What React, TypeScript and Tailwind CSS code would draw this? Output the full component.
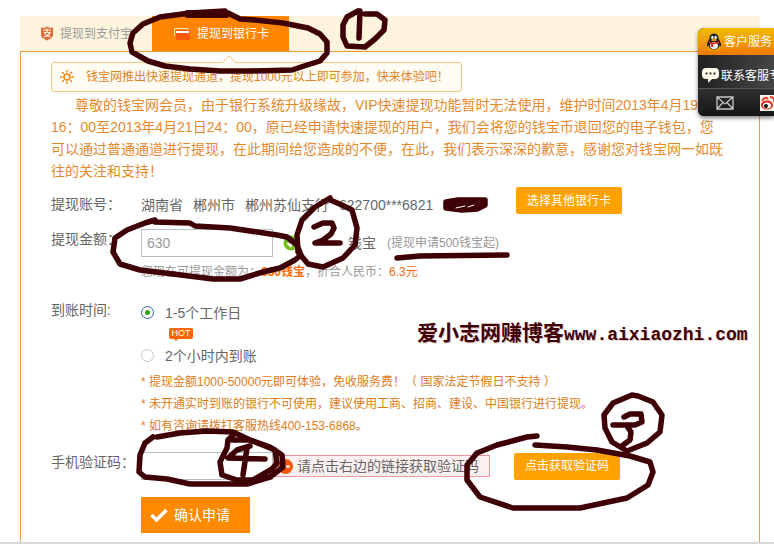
import React, { useState } from 'react';

type FormRowProps = {
	label?: string;
	htmlFor?: string;
	className?: string;
	children: React.ReactNode;
};

const FormRow = (props: FormRowProps) => {
	const {
		label,
		htmlFor,
		className,
		children,
	} = props;

	return (
		<div className={`flex items-start ${className || ''}`}>
			<label htmlFor={htmlFor} className="w-[90px] shrink-0 leading-5 whitespace-nowrap">{label}</label>
			<div className="min-w-0 flex-1">{children}</div>
		</div>
	);
};

type SmallButtonProps = {
	className?: string;
	children: React.ReactNode;
};

const SmallButton = (props: SmallButtonProps) => (
	<button type="button" className={`h-[27px] w-[106px] shrink-0 rounded-xs bg-[#ffa200] text-xs text-white ${props.className || ''}`}>
		{props.children}
	</button>
);

const AlipayIcon = () => (
	<svg width="14" height="15" viewBox="0 0 14 15" aria-hidden="true">
		<path d="M1 1.5 4 2 7 .5 10 2l3-.5V9c0 2.500-3 4-6 5.500C4 13 1 11.500 1 9Z" fill="#e26a3c" />
		<path d="M3 4h8M7 2.500v4M3.800 6.500h6.200C9 9 6.500 10.500 3.500 11M4.500 7.500C6 9.500 8 10.500 10.500 10.800" fill="none" stroke="#fff5df" strokeWidth="1.200" />
	</svg>
);

const CardIcon = () => (
	<svg width="16" height="12" viewBox="0 0 16 12" aria-hidden="true">
		<path d="M.5 8V.5h13V2" fill="none" stroke="#ffe2b8" />
		<rect x="2" y="2" width="14" height="10" rx="1" fill="#ff5a0a" />
		<path d="M2 4h13" stroke="#fff" strokeWidth="2" />
	</svg>
);

const SunIcon = () => (
	<svg width="14" height="14" viewBox="0 0 14 14" fill="none" stroke="#ef8b1c" aria-hidden="true">
		<circle cx="7" cy="7" r="3" strokeWidth="1.600" />
		<path d="M7 0v2.500M7 11.500V14M0 7h2.500M11.500 7H14M2 2l1.800 1.800M10.200 10.200 12 12M12 2l-1.800 1.800M3.800 10.200 2 12" strokeWidth="1.500" />
	</svg>
);

const OkIcon = () => (
	<svg width="16" height="16" viewBox="0 0 16 16" aria-hidden="true">
		<circle cx="8" cy="8" r="7.500" fill="#72bf1e" />
		<path d="m4.500 8 3 3 4.500-6" fill="none" stroke="#fff" strokeWidth="2.200" />
	</svg>
);

const MinusIcon = () => (
	<svg width="15" height="15" viewBox="0 0 15 15" className="shrink-0" aria-hidden="true">
		<circle cx="7.500" cy="7.500" r="7.500" fill="#f4590b" />
		<path d="M3.500 7.500h8" stroke="#fff" strokeWidth="2" />
	</svg>
);

const QQIcon = () => (
	<svg width="16" height="18" viewBox="0 0 16 18" className="shrink-0" aria-hidden="true">
		<ellipse cx="5" cy="16" rx="3.500" ry="1.500" fill="#f3a000" />
		<ellipse cx="11" cy="16" rx="3.500" ry="1.500" fill="#f3a000" />
		<path d="M8 .5c3 0 4.500 2.200 4.500 5C14 8 15.500 11 15 13c-.5.8-1-.2-1.500-.8C13 15 11 16.500 8 16.500S3 15 2.500 12.200C2 12.800 1.500 13.800 1 13 .5 11 2 8 3.500 5.500c0-2.800 1.500-5 4.500-5Z" fill="#17202c" />
		<ellipse cx="8" cy="12.500" rx="4" ry="3.500" fill="#fff" />
		<ellipse cx="6.400" cy="4.400" rx="1.200" ry="1.700" fill="#fff" />
		<ellipse cx="9.600" cy="4.400" rx="1.200" ry="1.700" fill="#fff" />
		<ellipse cx="8" cy="7" rx="3" ry="1" fill="#f9a800" />
		<path d="M3 8c3 2 7 2 10 0v2c-2 1-4 1.300-6 1.200V14H5v-3l-2-1Z" fill="#e5231b" />
	</svg>
);

const ChatIcon = () => (
	<svg width="17" height="15" viewBox="0 0 17 15" className="shrink-0" aria-hidden="true">
		<path d="M4 0h9q4 0 4 4v3q0 4-4 4h-3l-4 4v-4H4q-4 0-4-4V4q0-4 4-4Z" fill="#fffbea" />
		<path d="M3.500 4.500h2v2h-2zM7.500 4.500h2v2h-2zM11.500 4.500h2v2h-2z" fill="#333" />
	</svg>
);

const MailIcon = () => (
	<svg width="18" height="14" viewBox="0 0 18 14" fill="none" stroke="#c4c4c4" aria-hidden="true">
		<path d="M1 1h16v12H1zM1 1l8 7 8-7M1 13l6-6.500M17 13l-6-6.500" strokeWidth="1.300" />
	</svg>
);

const WeiboIcon = () => (
	<svg width="16" height="16" viewBox="0 0 16 16" className="shrink-0" aria-hidden="true">
		<path d="M0 0h16v16H0z" fill="#fff3ea" />
		<ellipse cx="7" cy="10" rx="6" ry="4.500" fill="#dc2c20" />
		<ellipse cx="7" cy="10.500" rx="4" ry="3" fill="#fff" />
		<circle cx="6" cy="11" r="2" fill="#111" />
		<path d="M2 6q3-5 6-2M10 2q5 0 4 5" fill="none" stroke="#e8442c" strokeWidth="2" />
	</svg>
);

const ServiceWidget = () => (
	<aside className="absolute top-7 right-0 w-[76px] overflow-hidden rounded-l-md bg-[#262626] text-xs whitespace-nowrap text-white shadow-[0_2px_4px_rgba(0,0,0,0.5)]">
		<a href="#service" className="flex h-[27px] items-center gap-[2px] bg-linear-to-b from-[#efbb00] to-[#ee7a00] pl-2">
			<QQIcon />
			<span>客户服务</span>
		</a>
		<a href="#chat" className="flex h-[34px] items-center gap-[2px] border-b border-[#555] bg-linear-to-r from-[#222] to-[#454545] pt-2 pl-1">
			<ChatIcon />
			<span>联系客服专</span>
		</a>
		<div className="flex h-[27px] items-center gap-[26px] bg-linear-to-b from-[#303030] to-[#161616] pl-[18px]">
			<a href="#mail" aria-label="邮件"><MailIcon /></a>
			<a href="#weibo" aria-label="微博"><WeiboIcon /></a>
		</div>
	</aside>
);

// hand-drawn numbered steps on top of the form
const Annotations = () => (
	<svg
		width="774"
		height="544"
		viewBox="0 0 774 544"
		className="pointer-events-none absolute top-0 left-0"
		fill="none"
		stroke="#3f0005"
		strokeWidth="5.500"
		strokeLinecap="round"
		strokeLinejoin="round"
		aria-hidden="true"
	>
		<path d="M225 11 190 13 160 17 143 24 133 33 130 43 132 52 148 61 165 66 190 69 220 71 250 71 292 70 304 66 320 61 327 53 327 42 320 34 308 28 283 23 255 20 240 19 228 13" />
		<path d="M188 14H226" strokeWidth="8" />
		<path d="M358 11 347 17 343 25 343 37 347 46 365 47 375 39 384 30 385 20 377 14 365 14M360 11 359 38" />
		<path d="M155 220 145 223 127 230 115 238 113 252 120 264 140 270 173 274 213 279 240 279 263 272 280 268 295 260 301 255 297 245 287 237 277 235 230 228 195 226 190 223 155 222" />
		<path d="M330 198 315 207 302 220 297 235 298 252 308 264 323 267 343 258 355 245 357 228 352 210 342 205 330 200M314 227 323 223 332 223 334 228 331 234 323 240 315 243 340 243" />
		<path d="M397 258 420 256 507 255" />
		<path d="M446 202 458 200 485 200 485 205 477 209 462 210 446 208Z" fill="#3f0005" />
		<path d="M456 208 465 206M468 207 474 205" stroke="#fff" strokeWidth="1" />
		<path d="M632 395 613 403 604 415 605 428 612 442 627 451 647 443 660 432 662 415 653 402 638 396ZM624 417 630 414 641 414 642 422 635 425 613 425M627 426 631 432 630 440 623 445" />
		<path d="M537 436 527 437 497 445 477 453 467 465 467 480 480 497 513 508 580 508 627 498 648 485 653 472 650 462 630 456 597 450 567 447 535 445" />
		<path d="M153 437 145 443 140 455 139 472 145 477 167 479 190 484 247 484 270 477 283 467 282 455 270 447 250 440 233 432 207 431 180 433 157 437" />
		<path d="M235 433 228 440 227 448 220 462 222 475 237 480 253 480 272 469 277 463 275 450 250 440 232 440M250 446 237 450 228 458 265 459M247 448 243 475" />
	</svg>
);

const arrivalOptions = [
	{ value: 'normal', text: '1-5个工作日' },
	{ value: 'fast', text: '2个小时内到账' },
];

const notes = [
	'* 提现金额1000-50000元即可体验，免收服务费！（ 国家法定节假日不支持 ）',
	'* 未开通实时到账的银行不可使用，建议使用工商、招商、建设、中国银行进行提现。',
	'* 如有咨询请拨打客服热线400-153-6868。',
];

const App = () => {
	const [arrival, setArrival] = useState('normal');
	const [amount, setAmount] = useState('630');
	const [code, setCode] = useState('');

	return (
		<div className="relative overflow-hidden border-b-2 border-[#d9d9d9] bg-white pt-4 font-['Liberation_Sans','Noto_Sans_CJK_SC',sans-serif] text-sm text-[#666]">
			<main className="mr-[14px] ml-5 border-x border-[#e9a250]">
				<nav className="-mx-px flex h-9 border-b border-[#e9993c] bg-[#fef4dd] text-xs">
					<a href="#alipay" className="flex w-[132px] shrink-0 items-center gap-[6px] pl-5 text-[#999]">
						<AlipayIcon />
						提现到支付宝
					</a>
					<a href="#bank" className="flex w-[137px] shrink-0 items-center gap-[7px] bg-[#ff8400] pl-[22px] text-white">
						<CardIcon />
						提现到银行卡
					</a>
				</nav>

				<form className="px-[30px] pt-[10px] pb-[9px]" onSubmit={(e) => e.preventDefault()}>
					<div className="relative flex h-[30px] w-[411px] items-center gap-3 rounded-[3px] border border-[#f3c780] bg-[#fffcf3] pl-2 text-xs whitespace-nowrap text-[#e08424]">
						<svg width="14" height="8" viewBox="0 0 14 8" className="absolute -top-2 left-[170px]" aria-hidden="true">
							<path d="m0 8 7-7 7 7" fill="#fffcf3" stroke="#f3c780" />
						</svg>
						<SunIcon />
						钱宝网推出快速提现通道，提现1000元以上即可参加，快来体验吧！
					</div>

					<p className="mt-[2px] indent-6 leading-[22px] whitespace-nowrap text-[#e5892d]">
						尊敬的钱宝网会员，由于银行系统升级缘故，VIP快速提现功能暂时无法使用，维护时间2013年4月19
						<br />
						16：00至2013年4月21日24：00，原已经申请快速提现的用户，我们会将您的钱宝币退回您的电子钱包，您
						<br />
						可以通过普通通道进行提现，在此期间给您造成的不便，在此，我们表示深深的歉意，感谢您对钱宝网一如既
						<br />
						往的关注和支持！
					</p>

					<FormRow label="提现账号：" className="mt-[5px] pt-[7px]">
						<div className="-mt-[7px] flex h-[27px] items-start whitespace-nowrap">
							<span className="flex w-[375px] shrink-0 gap-[10px] pt-2 leading-5">
								<span>湖南省</span>
								<span>郴州市</span>
								<span>郴州苏仙支行</span>
								<span>622700***6821</span>
							</span>
							<SmallButton>选择其他银行卡</SmallButton>
						</div>
					</FormRow>

					<FormRow label="提现金额：" htmlFor="amount" className="mt-[15px]">
						<div className="flex h-7 items-center whitespace-nowrap">
							<input
								id="amount"
								className="h-7 w-[132px] border border-[#b5bfc4] px-[5px] text-[#999]"
								value={amount}
								onChange={(e) => setAmount(e.target.value)}
							/>
							<span className="ml-[10px] w-[65px]"><OkIcon /></span>
							<span>钱宝</span>
							<span className="ml-[11px] text-xs text-[#999]">(提现申请500钱宝起)</span>
						</div>
						<p className="mt-[5px] text-xs leading-5 whitespace-nowrap text-[#999]">
							您现在可提现金额为：
							<b className="text-[#ff6a00]">630钱宝</b>
							，折合人民币：
							<span className="text-[#f06a14]">6.3元</span>
						</p>
					</FormRow>

					<FormRow label="到账时间:" className="mt-[18px]">
						<div className="pt-[3px]">
							{arrivalOptions.map((option, index) => (
								<React.Fragment key={option.value}>
									{index > 0 && (
										<div className="flex h-[23px] pt-[5px] pl-7">
											<span className="relative h-[11px] w-6 rounded-xs bg-[#ff6500] text-center text-[9px] leading-[11px] text-white">
												HOT
												<i className="absolute top-[11px] left-[5px] border-x-2 border-t-2 border-x-transparent border-t-[#ff6500]" />
											</span>
										</div>
									)}
									<label className="flex h-5 items-center gap-[11px]">
										<input
											type="radio"
											name="arrival"
											className="mb-[2px] flex size-[13px] appearance-none items-center justify-center rounded-full border border-[#c5c5c5] bg-white checked:border-[#38679b] checked:before:size-[5px] checked:before:rounded-full checked:before:bg-[#35a51e]"
											value={option.value}
											checked={arrival === option.value}
											onChange={() => setArrival(option.value)}
										/>
										{option.text}
									</label>
								</React.Fragment>
							))}
						</div>
						<ul className="mt-[5px] text-xs leading-[22px] whitespace-nowrap text-[#e07c20]">
							{notes.map((note) => <li key={note}>{note}</li>)}
						</ul>
					</FormRow>

					<FormRow label="手机验证码：" htmlFor="code" className="mt-[15px]">
						<div className="flex h-7 items-center whitespace-nowrap">
							<input
								id="code"
								className="h-7 w-[132px] shrink-0 border border-[#b5bfc4] px-[5px]"
								value={code}
								onChange={(e) => setCode(e.target.value)}
							/>
							<span className="flex h-[22px] w-[217px] shrink-0 items-center gap-1 border border-[#f0929c] bg-[#fdf0f0] pl-1">
								<MinusIcon />
								请点击右边的链接获取验证码
							</span>
							<SmallButton className="ml-6">点击获取验证码</SmallButton>
						</div>
					</FormRow>

					<FormRow className="mt-[17px]">
						<button type="submit" className="flex h-9 w-[109px] items-center gap-[6px] bg-[#ff8a00] pl-[9px] text-white">
							<svg width="18" height="14" viewBox="0 0 18 14" aria-hidden="true">
								<path d="m1.500 7 5 5 10-10" fill="none" stroke="#fff" strokeWidth="3.500" />
							</svg>
							确认申请
						</button>
					</FormRow>
				</form>
			</main>

			<p className="absolute top-[321px] left-[417px] flex items-center font-['Liberation_Mono','Noto_Sans_CJK_SC',monospace] text-lg leading-7 font-bold whitespace-nowrap text-[#3f0005] [text-shadow:1px_1px_0_#e3c9c9]">
				<span className="text-[21px]">爱小志网赚博客</span>
				www.aixiaozhi.com
			</p>
			<ServiceWidget />
			<Annotations />
		</div>
	);
};

export default App;
